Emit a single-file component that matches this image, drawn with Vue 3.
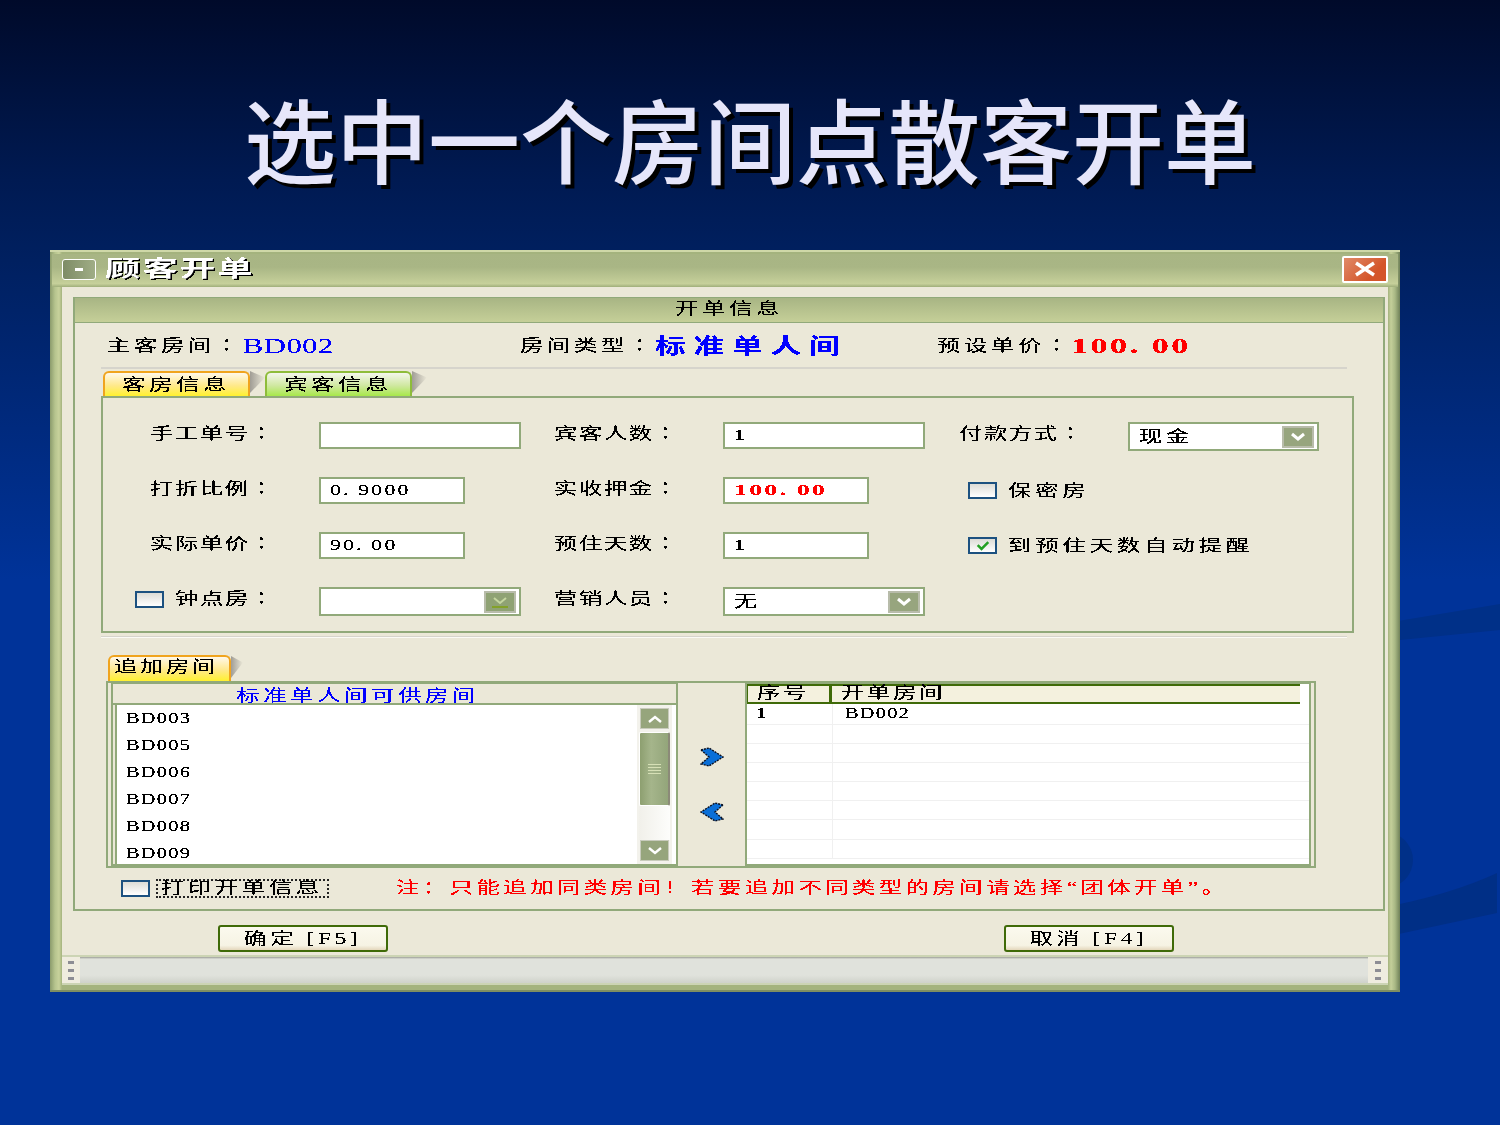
<script setup>
const rooms = ['BD003', 'BD005', 'BD006', 'BD007', 'BD008', 'BD009']
const gridRows = [
  { no: '1', room: 'BD002' },
  { no: '', room: '' }, { no: '', room: '' }, { no: '', room: '' },
  { no: '', room: '' }, { no: '', room: '' }, { no: '', room: '' }, { no: '', room: '' }
]
</script>

<template>
  <div class="page">
    <svg class="defs" width="0" height="0" aria-hidden="true">
      <filter id="crisp" x="-5%" y="-20%" width="110%" height="140%" color-interpolation-filters="sRGB">
        <feComponentTransfer>
          <feFuncA type="discrete" tableValues="0 1 1" />
        </feComponentTransfer>
      </filter>
    </svg>
    <svg class="swoosh" viewBox="0 0 1500 1125" width="1500" height="1125" aria-hidden="true">
      <path d="M1380 624 L1500 604 L1500 630 L1380 642 Z" fill="#003088" />
      <circle cx="1385" cy="860" r="28" fill="#003088" />
      <path d="M1380 908 Q1450 895 1497 873 L1497 913 L1380 938 Z" fill="#002f86" />
    </svg>

    <h1 class="title">选中一个房间点散客开单</h1>

    <section class="window">
      <header class="titlebar">
        <span class="min-btn"><i></i></span>
        <span class="t win-title">顾客开单</span>
        <span class="close-btn">
          <svg width="28" height="18" viewBox="0 0 28 18"><path d="M5 3 L23 15 M23 3 L5 15" stroke="#fff" stroke-width="3.4" /></svg>
        </span>
      </header>

      <div class="client">
        <div class="panel">
          <div class="panel-head"><span class="t center wide">开单信息</span></div>

          <div class="info">
            <div><span class="t cap wide">主客房间：</span><span class="t blue code-val">BD002</span></div>
            <div><span class="t cap wide">房间类型：</span><span class="t blue big">标准单人间</span></div>
            <div><span class="t cap wide">预设单价：</span><span class="t red money">100. 00</span></div>
          </div>

          <div class="tabs">
            <span class="tab yellow"><span class="t center wide">客房信息</span></span>
            <span class="corner"></span>
            <span class="tab green"><span class="t center wide">宾客信息</span></span>
            <span class="corner"></span>
          </div>

          <div class="tab-panel">
            <div class="field">
              <label class="lbl"><span class="t cap">手工单号：</span></label>
              <span class="input w200"></span>
            </div>
            <div class="field">
              <label class="lbl"><span class="t cap">宾客人数：</span></label>
              <span class="input w200"><span class="t val strong">1</span></span>
            </div>
            <div class="field">
              <label class="lbl"><span class="t cap">付款方式：</span></label>
              <span class="input w190 combo"><span class="t wide">现金</span>
                <span class="drop"><svg width="18" height="10" viewBox="0 0 18 10"><path d="M3 2 L9 7 L15 2" fill="none" stroke="#fff" stroke-width="3" /></svg></span>
              </span>
            </div>

            <div class="field">
              <label class="lbl"><span class="t cap">打折比例：</span></label>
              <span class="input w145"><span class="t val">0. 9000</span></span>
            </div>
            <div class="field">
              <label class="lbl"><span class="t cap">实收押金：</span></label>
              <span class="input w145"><span class="t money-sm red">100. 00</span></span>
            </div>
            <div class="field check-field">
              <span class="box"></span><span class="t">保密房</span>
            </div>

            <div class="field">
              <label class="lbl"><span class="t cap">实际单价：</span></label>
              <span class="input w145"><span class="t val">90. 00</span></span>
            </div>
            <div class="field">
              <label class="lbl"><span class="t cap">预住天数：</span></label>
              <span class="input w145"><span class="t val strong">1</span></span>
            </div>
            <div class="field check-field">
              <span class="box">
                <svg width="26" height="13" viewBox="0 0 26 13"><path d="M8 6 L12 10 L19 3" fill="none" stroke="#23a023" stroke-width="2.6" /></svg>
              </span><span class="t">到预住天数自动提醒</span>
            </div>

            <div class="field">
              <label class="lbl lbl-check"><span class="box"></span><span class="t cap">钟点房：</span></label>
              <span class="input w200 combo">
                <span class="drop off"><svg width="18" height="12" viewBox="0 0 18 12"><path d="M3 2 L9 7 L15 2" fill="none" stroke="#c5d6a0" stroke-width="2" /><path d="M1 11 H17" stroke="#7fa010" stroke-width="1.5" /></svg></span>
              </span>
            </div>
            <div class="field">
              <label class="lbl"><span class="t cap">营销人员：</span></label>
              <span class="input w200 combo"><span class="t wide">无</span>
                <span class="drop"><svg width="18" height="10" viewBox="0 0 18 10"><path d="M3 2 L9 7 L15 2" fill="none" stroke="#fff" stroke-width="3" /></svg></span>
              </span>
            </div>
          </div>

          <div class="rule"></div>

          <div class="tabs add-tabs">
            <span class="tab yellow add"><span class="t center wide">追加房间</span></span>
            <span class="corner"></span>
          </div>

          <div class="frame">
            <div class="list">
              <div class="list-head"><span class="t center blue wide">标准单人间可供房间</span></div>
              <div class="list-body">
                <ul class="rooms">
                  <li v-for="r in rooms" :key="r"><span class="t code">{{ r }}</span></li>
                </ul>
                <div class="scroll">
                  <span class="sbtn"><svg width="18" height="10" viewBox="0 0 18 10"><path d="M3 8 L9 3 L15 8" fill="none" stroke="#fff" stroke-width="2.4" /></svg></span>
                  <span class="thumb"><i></i><i></i><i></i><i></i></span>
                  <span class="track"></span>
                  <span class="sbtn"><svg width="18" height="10" viewBox="0 0 18 10"><path d="M3 2 L9 7 L15 2" fill="none" stroke="#fff" stroke-width="2.4" /></svg></span>
                </div>
              </div>
            </div>

            <div class="movers">
              <svg width="24" height="20" viewBox="0 0 24 20"><path d="M1 3 L9 1 L23 10 L9 19 L1 17 L9 10 Z" fill="#0a6fd8" stroke="#0a1020" stroke-width="1.4" stroke-dasharray="2 1" /></svg>
              <svg width="24" height="20" viewBox="0 0 24 20"><path d="M23 3 L15 1 L1 10 L15 19 L23 17 L15 10 Z" fill="#0a6fd8" stroke="#0a1020" stroke-width="1.4" stroke-dasharray="2 1" /></svg>
            </div>

            <div class="grid">
              <div class="grid-head">
                <span class="gh no"><span class="t">序号</span></span>
                <span class="gh room"><span class="t">开单房间</span></span>
              </div>
              <div v-for="(row, i) in gridRows" :key="i" class="grid-row">
                <span class="cell no"><span class="t code strong">{{ row.no }}</span></span>
                <span class="cell room"><span class="t code">{{ row.room }}</span></span>
              </div>
            </div>
          </div>

          <div class="note-row">
            <span class="box"></span>
            <span class="focus"><span class="t">打印开单信息</span></span>
            <span class="t red note">注：只能追加同类房间！若要追加不同类型的房间请选择“团体开单”。</span>
          </div>
        </div>

        <div class="actions">
          <button class="btn"><span class="t center">确定  [F5]</span></button>
          <button class="btn"><span class="t center">取消  [F4]</span></button>
        </div>

        <div class="status">
          <span class="grip"><i></i><i></i><i></i></span>
          <span class="status-fill"></span>
          <span class="grip right"><i></i><i></i><i></i></span>
        </div>
      </div>
    </section>
  </div>
</template>

<style scoped>
.page {
  position: relative;
  width: 1500px;
  height: 1125px;
  overflow: hidden;
  background: linear-gradient(180deg, #000a2a 0, #001a52 180px, #002060 260px, #003399 580px, #003399 100%);
  font-family: "Liberation Serif", "Noto Sans CJK SC", serif;
  color: #000;
}
.defs { position: absolute; }
.swoosh { position: absolute; left: 0; top: 0; }

.title {
  position: relative;
  margin: 0;
  height: 250px;
  padding-top: 76px;
  box-sizing: border-box;
  text-align: center;
  font-family: "Noto Sans CJK SC", serif;
  font-size: 92px;
  line-height: 122px;
  font-weight: 500;
  color: #e6e6fa;
  text-shadow: 4px 4px 0 #000;
  white-space: nowrap;
}

.t {
  display: inline-block;
  font-size: 16px;
  line-height: 18px;
  letter-spacing: 2.5px;
  white-space: pre;
  transform: scaleX(1.45);
  transform-origin: left center;
  filter: url(#crisp);
}
.t.center { transform-origin: center center; }
.t.wide { letter-spacing: 2.6px; }
.t.cap { font-family: "Liberation Serif", "Noto Sans CJK TC", serif; letter-spacing: 1.2px; }
.t.cap.wide { letter-spacing: 2.6px; }
.blue { color: #0000ff; }
.red { color: #ff0000; }
.t.strong { font-weight: 700; }

.window {
  position: relative;
  width: 1350px;
  height: 742px;
  margin-left: 50px;
  box-sizing: border-box;
  display: flex;
  flex-direction: column;
  padding: 2px 12px 5px;
  background: linear-gradient(90deg, #8b9b6c 0, #b6c48e 5px, #c8d29c 9px, #a4b37e 12px, #a4b37e calc(100% - 12px), #c4cf9a calc(100% - 9px), #a9b885 calc(100% - 5px), #6f8058 100%);
  border-top: 2px solid #cfd8a8;
  border-bottom: 2px solid #7f8f62;
}
.titlebar {
  flex: none;
  margin: 0 -10px;
  height: 33px;
  box-sizing: border-box;
  display: flex;
  align-items: center;
  padding: 0 10px 3px;
  background: linear-gradient(180deg, #a8b584 0, #a9b685 40%, #c6d09a 90%, #9fae7a 100%);
}
.min-btn {
  width: 34px;
  height: 21px;
  box-sizing: border-box;
  border: 1px solid #fff;
  border-radius: 3px;
  background: linear-gradient(90deg, #7e8c66, #a0ad86);
  display: flex;
  align-items: center;
  justify-content: center;
}
.min-btn i { width: 8px; height: 3px; background: #fff; }
.t.win-title {
  margin-left: 9px;
  font-size: 22px;
  line-height: 24px;
  font-weight: 700;
  letter-spacing: 1.4px;
  color: #fff;
  text-shadow: 1px 1px 0 #000;
  transform: scaleX(1.6);
}
.close-btn {
  margin-left: auto;
  width: 46px;
  height: 27px;
  border: 2px solid #fff;
  border-radius: 2px;
  box-sizing: border-box;
  background: linear-gradient(135deg, #e08a68, #d4552a 70%);
  display: flex;
  align-items: center;
  justify-content: center;
}

.client {
  flex: 1;
  min-height: 0;
  display: flex;
  flex-direction: column;
  background: #ebe8d8;
  padding: 10px 3px 0 11px;
}
.panel {
  flex: none;
  height: 614px;
  box-sizing: border-box;
  border: 2px solid #91a97a;
  border-top-width: 1px;
  display: flex;
  flex-direction: column;
}
.panel-head {
  flex: none;
  height: 24px;
  border-bottom: 1px solid #91a97a;
  background: linear-gradient(180deg, #a8b584, #c5cf98);
  display: flex;
  justify-content: center;
  align-items: center;
}
.panel-head .t { position: relative; top: -1px; }

.info {
  flex: none;
  height: 46px;
  margin-left: 26px;
  width: 1246px;
  padding-left: 6px;
  box-sizing: border-box;
  border-bottom: 2px solid #d6d4cc;
  display: grid;
  grid-template-columns: 413px 417px 1fr;
  align-items: center;
}
.info > div { display: flex; align-items: center; white-space: nowrap; position: relative; top: 1px; }
.t.code-val {
  margin-left: 43px;
  font-size: 21px;
  letter-spacing: 0.4px;
}
.t.big {
  margin-left: 42px;
  font-size: 21px;
  line-height: 26px;
  font-weight: 700;
  letter-spacing: 5.6px;
}
.t.money {
  margin-left: 41px;
  font-size: 20px;
  font-weight: 700;
  letter-spacing: 1.5px;
  transform: scaleX(1.7);
}

.tabs {
  flex: none;
  height: 27px;
  margin-left: 28px;
  display: flex;
  align-items: flex-end;
}
.tab {
  width: 147px;
  height: 25px;
  box-sizing: border-box;
  border-radius: 6px 6px 0 0;
  display: flex;
  align-items: center;
  justify-content: center;
}
.tab.yellow {
  border: 2px solid #f0a41e;
  border-bottom: 0;
  background: linear-gradient(180deg, #fff8ea 0, #ffe98a 55%, #fff12f 100%);
}
.tab.green {
  border: 2px solid #8ebc3a;
  border-bottom: 0;
  background: linear-gradient(180deg, #f4f6ec 0, #cfe8a0 55%, #a7e84a 100%);
}
.corner {
  width: 15px;
  height: 22px;
  margin-bottom: 3px;
  background: linear-gradient(90deg, #a09d95, #ebe8d8);
  clip-path: polygon(0 0, 100% 30%, 0 100%);
}

.tab-panel {
  flex: none;
  width: 1253px;
  height: 237px;
  margin-left: 26px;
  box-sizing: border-box;
  border: 2px solid #91a97a;
  padding: 24px 0 0 16px;
  display: grid;
  grid-template-columns: 404px 405px 1fr;
  grid-auto-rows: 55px;
  align-content: start;
}
.field { display: flex; align-items: flex-start; }
.lbl {
  width: 200px;
  box-sizing: border-box;
  padding-left: 31px;
  padding-top: 3px;
  flex: none;
}
.lbl-check { padding-left: 16px; display: flex; align-items: center; gap: 11px; padding-top: 3px; }
.input {
  height: 27px;
  box-sizing: border-box;
  border: 2px solid #91a97a;
  background: #fff;
  position: relative;
  display: flex;
  align-items: center;
  padding-left: 9px;
}
.w200 { width: 202px; }
.w190 { width: 191px; }
.w145 { width: 146px; }
.t.val { font-size: 15px; letter-spacing: 1.5px; position: relative; top: -1px; }
.t.money-sm {
  font-size: 15px;
  font-weight: 700;
  letter-spacing: 1.4px;
  transform: scaleX(1.7);
  position: relative;
  top: -1px;
}
.combo { height: 29px; }
.drop {
  position: absolute;
  right: 3px;
  top: 2px;
  width: 32px;
  height: 22px;
  border: 2px solid #b8bcaa;
  box-sizing: border-box;
  background: #97a57e;
  display: flex;
  align-items: center;
  justify-content: center;
}
.drop.off { background: #8fa274; }
.check-field { align-items: center; height: 27px; gap: 11px; padding-left: 40px; }
.check-field .t { letter-spacing: 2.8px; }
.box {
  flex: none;
  width: 29px;
  height: 17px;
  box-sizing: border-box;
  border: 2px solid #1c5180;
  background: linear-gradient(180deg, #dcdcd6, #fff);
  display: inline-flex;
  align-items: center;
  justify-content: center;
}

.rule {
  flex: none;
  width: 1246px;
  height: 2px;
  margin: 3px 0 0 26px;
  background: #fbfaf5;
  border-top: 1px solid #d6d4cc;
  box-sizing: border-box;
}
.add-tabs { margin: 16px 0 0 33px; height: 27px; }
.tab.add { width: 123px; height: 26px; padding-right: 6px; }
.tab.add .t { letter-spacing: 2px; position: relative; top: -2px; }
.add-tabs .corner { width: 12px; }

.frame {
  flex: none;
  width: 1210px;
  height: 187px;
  margin-left: 31px;
  box-sizing: border-box;
  border: 2px solid #91a97a;
  display: flex;
  padding: 0 0 0 3px;
}
.list {
  width: 567px;
  box-sizing: border-box;
  border: 2px solid #91a97a;
  border-top-width: 1px;
  display: flex;
  flex-direction: column;
}
.list-head {
  flex: none;
  padding-right: 74px;
  box-sizing: content-box;
  height: 19px;
  border-bottom: 2px solid #91a97a;
  display: flex;
  justify-content: center;
  align-items: center;
  overflow: hidden;
}
.list-head .t { position: relative; top: 2px; }
.list-body {
  flex: 1;
  min-height: 0;
  margin-left: 2px;
  border-left: 2px solid #91a97a;
  background: #fff;
  display: flex;
}
.rooms {
  flex: 1;
  margin: 0;
  padding: 0 0 0 9px;
  list-style: none;
  overflow: hidden;
}
.rooms li { height: 27px; display: flex; align-items: center; }
.t.code { font-size: 14px; letter-spacing: 0.9px; }
.scroll {
  flex: none;
  width: 35px;
  margin-right: 4px;
  padding: 3px 2px 3px;
  box-sizing: border-box;
  background: #f3f2ec;
  display: flex;
  flex-direction: column;
}
.sbtn {
  flex: none;
  height: 19px;
  margin: 0 1px;
  background: #96a57c;
  border: 1px solid #c8cbbc;
  display: flex;
  align-items: center;
  justify-content: center;
}
.thumb {
  flex: none;
  height: 74px;
  margin-top: 3px;
  box-sizing: border-box;
  border: 1px solid #fff;
  border-right: 2px solid #8b8a78;
  border-radius: 2px;
  background: linear-gradient(90deg, #8d9f70, #a5b58b 40%, #93a57a);
  display: flex;
  flex-direction: column;
  align-items: center;
  justify-content: center;
  gap: 2px;
}
.thumb i { width: 13px; height: 1px; background: #d6e0b6; }
.track { flex: 1; background: linear-gradient(90deg, #f1f0ea, #fdfdfb); }

.movers {
  width: 67px;
  flex: none;
  display: flex;
  flex-direction: column;
  align-items: center;
  padding-top: 64px;
  gap: 35px;
}
.grid {
  flex: 1;
  min-width: 0;
  margin-right: 3px;
  border: 2px solid #91a97a;
  border-top-width: 1px;
  background: #fff;
  overflow: hidden;
}
.grid-head {
  height: 20px;
  margin-right: 9px;
  display: flex;
  background: #f4f1de;
  border-top: 2px solid #3f6a08;
  border-bottom: 2px solid #3f6a08;
  box-sizing: border-box;
}
.gh {
  display: flex;
  align-items: center;
  box-sizing: border-box;
}
.gh .t { position: relative; top: -1px; letter-spacing: 2px; }
.gh.no {
  width: 85px;
  padding-left: 9px;
  border-left: 1px solid #3f6a08;
  border-right: 3px solid #3f6a08;
}
.gh.room { flex: 1; padding-left: 9px; }
.grid-row {
  height: 19.2px;
  display: flex;
  border-bottom: 1px solid #f0f0f0;
  box-sizing: border-box;
}
.grid-head + .grid-row { height: 20.5px; }
.cell { display: flex; align-items: center; box-sizing: border-box; }
.cell.no { width: 86px; padding-left: 9px; border-right: 1px solid #f0f0f0; }
.cell.room { padding-left: 12px; }

.note-row {
  flex: none;
  height: 26px;
  margin-top: 7px;
  display: flex;
  align-items: center;
  padding-left: 46px;
}
.focus {
  margin-left: 6px;
  width: 173px;
  height: 19px;
  box-sizing: border-box;
  border: 2px dotted #222;
  display: flex;
  align-items: center;
  flex: none;
  padding-left: 3px;
}
.focus .t { letter-spacing: 2.6px; }
.t.note {
  margin-left: 67px;
  letter-spacing: 2.5px;
}

.actions {
  flex: none;
  height: 44px;
  box-sizing: border-box;
  display: flex;
  align-items: flex-end;
  padding: 0 0 3px 145px;
  gap: 616px;
}
.btn {
  width: 170px;
  height: 27px;
  padding: 0;
  box-sizing: border-box;
  border: 2px solid #3f6a08;
  border-radius: 3px;
  background: linear-gradient(180deg, #fbf9ee 0, #f6f3e4 80%, #e4d7bc 100%);
  font: inherit;
  display: flex;
  align-items: center;
  justify-content: center;
}

.status {
  flex: none;
  height: 30px;
  margin: 0 -3px 0 -11px;
  display: flex;
  border-top: 2px solid #ccd4b4;
  border-bottom: 2px solid #ccd4b4;
  box-sizing: border-box;
  background: #efecdf;
}
.grip {
  flex: none;
  width: 18px;
  display: flex;
  flex-direction: column;
  align-items: center;
  justify-content: center;
  gap: 5px;
}
.grip.right { width: 20px; }
.grip i { width: 6px; height: 3px; background: #8d8d94; }
.status-fill {
  flex: 1;
  background: linear-gradient(180deg, #9c9e98 0, #e0e2dc 8%, #e0e2dc 70%, #cfd2ca 100%);
}
</style>
